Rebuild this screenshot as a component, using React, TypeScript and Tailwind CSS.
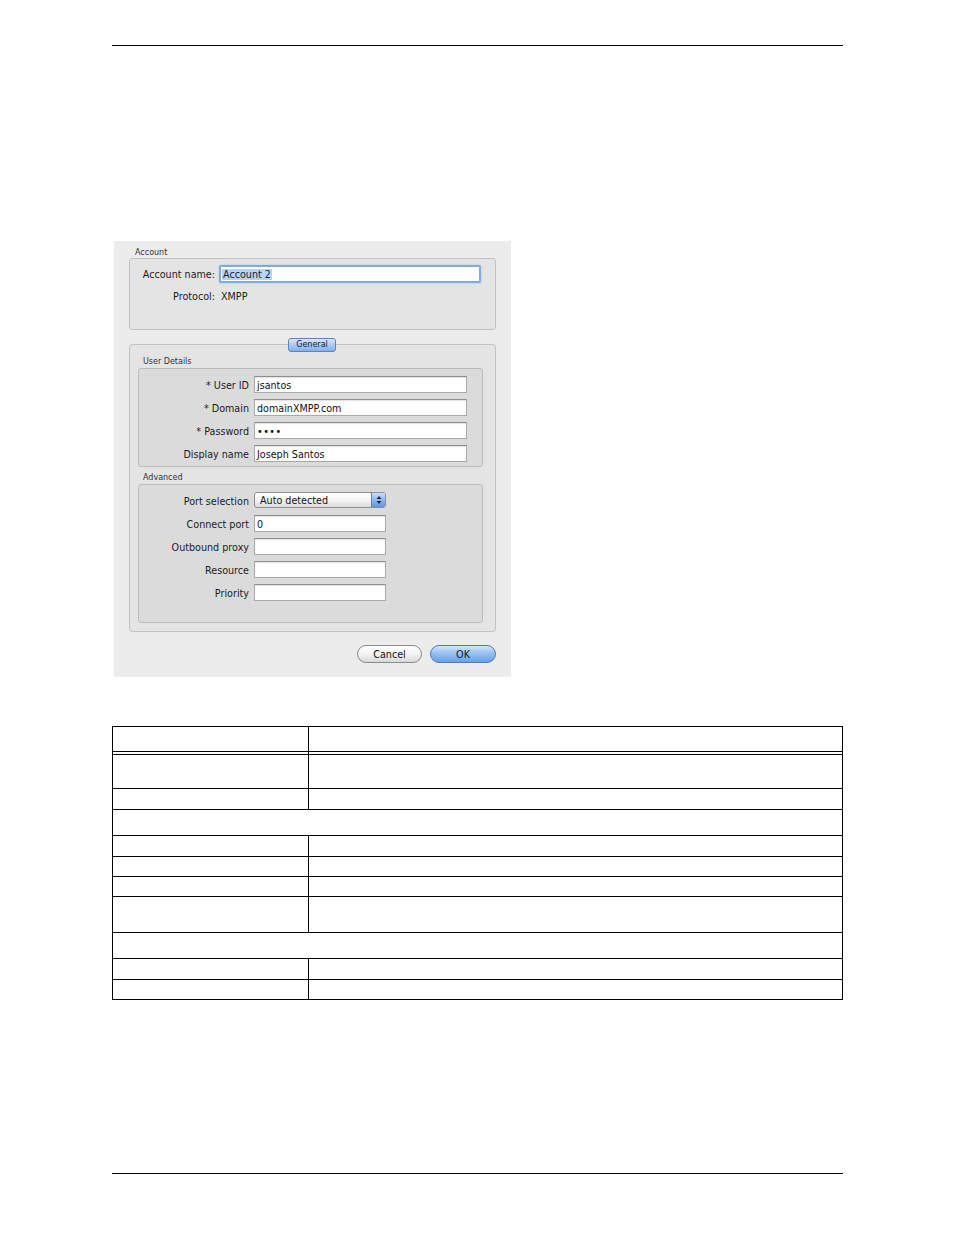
import React from "react";

const field = "h-[17px] bg-white border border-[#a9a9a9] border-t-[#8e8e8e] px-[2px] text-[9.6px] leading-[17px] text-[#111] shadow-[inset_0_1px_1px_rgba(0,0,0,0.12)]";

function FormRow({ label, children }: { label: string; children?: React.ReactNode }): JSX.Element {
  return (
    <div className="flex h-[17px] items-start gap-[5px]">
      <span className="h-[17px] w-[110px] text-right text-[9.6px] leading-[19px] text-[#1c1c1c]">{label}</span>
      {children}
    </div>
  );
}

function PopupButton({ value }: { value: string }): JSX.Element {
  return (
    <div className="flex h-[16px] w-[132px] overflow-hidden rounded-[3px] border border-[#8f8f8f] bg-gradient-to-b from-white via-[#f4f4f4] to-[#dcdcdc]">
      <span className="flex-1 pl-[5px] text-[9.6px] leading-[16px] text-[#111]">{value}</span>
      <span className="flex w-[14px] items-center justify-center border-l border-[#5a84c2] bg-gradient-to-b from-[#c9ddf8] via-[#8fb8ee] to-[#5d95e0]">
        <svg width="6" height="10" viewBox="0 0 6 10">
          <path d="M3 1 L5.5 4 L0.5 4 Z" fill="#1b2a44" />
          <path d="M3 9 L5.5 6 L0.5 6 Z" fill="#1b2a44" />
        </svg>
      </span>
    </div>
  );
}

function DialogShot(): JSX.Element {
  return (
    <div className="ml-[114px] mt-[195px] flex h-[436px] w-[397px] flex-col bg-[#ececec] pt-[6px] text-[#1c1c1c]">
      <div className="pl-[21px] text-[8px] leading-[11px] text-[#333]">Account</div>
      <div className="ml-[15px] h-[72px] w-[367px] rounded-[3px] border border-[#c2c2c2] bg-[#e4e4e4] pt-[6px]">
        <div className="flex h-[18px] items-center gap-[4px]">
          <span className="w-[85px] text-right text-[9.6px] leading-[19px]">Account name:</span>
          <div className="h-[18px] w-[262px] rounded-[2px] border-2 border-[#80aae3] bg-white px-[1px] text-[9.6px] leading-[15px] shadow-[0_0_2px_#9cbff0]">
            <span className="bg-[#b5d4fd] px-[1px]">Account 2</span>
          </div>
        </div>
        <div className="mt-[4px] flex h-[18px] items-center gap-[6px]">
          <span className="w-[85px] text-right text-[9.6px] leading-[19px]">Protocol:</span>
          <span className="text-[9.6px] leading-[19px]">XMPP</span>
        </div>
      </div>

      <div className="relative ml-[15px] mt-[14px] h-[288px] w-[367px] rounded-[3px] border border-[#c2c2c2] bg-[#e4e4e4] pt-[10px]">
        <div className="absolute left-[158px] top-[-7px] flex h-[14px] w-[48px] items-center justify-center rounded-[3px] border border-[#5d83bf] bg-gradient-to-b from-[#dbe9fb] via-[#a9c9f2] to-[#83b0ec] text-[8px] leading-[12px] text-[#10203a]">
          General
        </div>
        <div className="pl-[13px] text-[8px] leading-[13px] text-[#333]">User Details</div>
        <div className="ml-[8px] flex h-[99px] w-[345px] flex-col gap-[6px] rounded-[3px] border border-[#bcbcbc] bg-[#dbdbdb] pt-[7px]">
          <FormRow label="* User ID">
            <div className={`${field} w-[213px]`}>jsantos</div>
          </FormRow>
          <FormRow label="* Domain">
            <div className={`${field} w-[213px]`}>domainXMPP.com</div>
          </FormRow>
          <FormRow label="* Password">
            <div className={`${field} w-[213px] tracking-[0.5px]`}>••••</div>
          </FormRow>
          <FormRow label="Display name">
            <div className={`${field} w-[213px]`}>Joseph Santos</div>
          </FormRow>
        </div>
        <div className="mt-[5px] pl-[13px] text-[8px] leading-[12px] text-[#333]">Advanced</div>
        <div className="ml-[8px] flex h-[139px] w-[345px] flex-col gap-[6px] rounded-[3px] border border-[#bcbcbc] bg-[#dbdbdb] pt-[7px]">
          <FormRow label="Port selection">
            <PopupButton value="Auto detected" />
          </FormRow>
          <FormRow label="Connect port">
            <div className={`${field} w-[132px]`}>0</div>
          </FormRow>
          <FormRow label="Outbound proxy">
            <div className={`${field} w-[132px]`} />
          </FormRow>
          <FormRow label="Resource">
            <div className={`${field} w-[132px]`} />
          </FormRow>
          <FormRow label="Priority">
            <div className={`${field} w-[132px]`} />
          </FormRow>
        </div>
      </div>

      <div className="mt-[13px] flex justify-end gap-[8px] pr-[15px]">
        <button type="button" className="h-[18px] w-[65px] rounded-full border border-[#8a8a8a] bg-gradient-to-b from-white via-[#f3f3f3] to-[#d9d9d9] text-[9.6px] leading-[17px] text-[#111]">
          Cancel
        </button>
        <button type="button" className="h-[18px] w-[66px] rounded-full border border-[#4f78b8] bg-gradient-to-b from-[#d6e6fb] via-[#92bcf0] to-[#6aa2e8] text-[9.6px] leading-[17px] text-[#0d1b33]">
          OK
        </button>
      </div>
    </div>
  );
}

type Row = { h: string; span?: boolean };

const rows: Row[] = [
  { h: "h-[34px]" },
  { h: "h-[21px]" },
  { h: "h-[26px]", span: true },
  { h: "h-[21px]" },
  { h: "h-[20px]" },
  { h: "h-[20px]" },
  { h: "h-[36px]" },
  { h: "h-[26px]", span: true },
  { h: "h-[21px]" },
  { h: "h-[20px]" },
];

function DocTable(): JSX.Element {
  return (
    <div className="ml-[112px] mt-[49px] w-[731px] border-l border-r border-t border-black">
      <div className="flex h-[25px] border-b border-black">
        <div className="w-[196px] border-r border-black" />
        <div className="flex-1" />
      </div>
      <div className="flex h-[3px] border-b border-black">
        <div className="w-[196px] border-r border-black" />
        <div className="flex-1" />
      </div>
      {rows.map((row, index) => (
        <div key={index} className={`flex ${row.h} border-b border-black`}>
          {row.span ? null : <div className="w-[196px] border-r border-black" />}
          <div className="flex-1" />
        </div>
      ))}
    </div>
  );
}

export default function App(): JSX.Element {
  return (
    <div className="flex min-h-[1235px] w-[954px] flex-col bg-white pt-[45px] font-['DejaVu_Sans',sans-serif]">
      <div className="ml-[112px] h-px w-[731px] bg-black" />
      <DialogShot />
      <DocTable />
      <div className="ml-[112px] mt-[173px] h-px w-[731px] bg-black" />
    </div>
  );
}
